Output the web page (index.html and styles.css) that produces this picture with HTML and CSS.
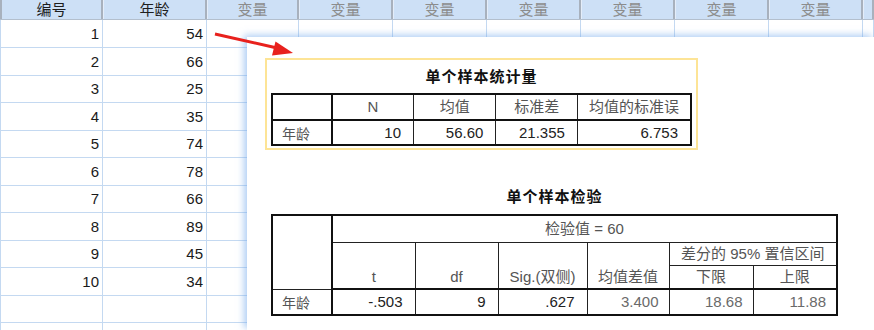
FILE: index.html
```html
<!DOCTYPE html>
<html lang="zh">
<head>
<meta charset="utf-8">
<link rel="stylesheet" href="styles.css">
</head>
<body>
<div class="sheet">
  <div class="row hdr">
    <div class="hc first">编号</div>
    <div class="hc">年龄</div>
    <div class="hc var">变量</div>
    <div class="hc var">变量</div>
    <div class="hc var">变量</div>
    <div class="hc var">变量</div>
    <div class="hc var">变量</div>
    <div class="hc var">变量</div>
    <div class="hc var">变量</div>
    <div class="hc var"></div>
  </div>
  <div class="row"><div class="c first">1</div><div class="c">54</div><div class="c"></div><div class="c"></div><div class="c"></div><div class="c"></div><div class="c"></div><div class="c"></div><div class="c"></div><div class="c"></div></div>
  <div class="row"><div class="c first">2</div><div class="c">66</div><div class="c"></div><div class="c"></div><div class="c"></div><div class="c"></div><div class="c"></div><div class="c"></div><div class="c"></div><div class="c"></div></div>
  <div class="row"><div class="c first">3</div><div class="c">25</div><div class="c"></div><div class="c"></div><div class="c"></div><div class="c"></div><div class="c"></div><div class="c"></div><div class="c"></div><div class="c"></div></div>
  <div class="row"><div class="c first">4</div><div class="c">35</div><div class="c"></div><div class="c"></div><div class="c"></div><div class="c"></div><div class="c"></div><div class="c"></div><div class="c"></div><div class="c"></div></div>
  <div class="row"><div class="c first">5</div><div class="c">74</div><div class="c"></div><div class="c"></div><div class="c"></div><div class="c"></div><div class="c"></div><div class="c"></div><div class="c"></div><div class="c"></div></div>
  <div class="row"><div class="c first">6</div><div class="c">78</div><div class="c"></div><div class="c"></div><div class="c"></div><div class="c"></div><div class="c"></div><div class="c"></div><div class="c"></div><div class="c"></div></div>
  <div class="row"><div class="c first">7</div><div class="c">66</div><div class="c"></div><div class="c"></div><div class="c"></div><div class="c"></div><div class="c"></div><div class="c"></div><div class="c"></div><div class="c"></div></div>
  <div class="row"><div class="c first">8</div><div class="c">89</div><div class="c"></div><div class="c"></div><div class="c"></div><div class="c"></div><div class="c"></div><div class="c"></div><div class="c"></div><div class="c"></div></div>
  <div class="row"><div class="c first">9</div><div class="c">45</div><div class="c"></div><div class="c"></div><div class="c"></div><div class="c"></div><div class="c"></div><div class="c"></div><div class="c"></div><div class="c"></div></div>
  <div class="row"><div class="c first">10</div><div class="c">34</div><div class="c"></div><div class="c"></div><div class="c"></div><div class="c"></div><div class="c"></div><div class="c"></div><div class="c"></div><div class="c"></div></div>
  <div class="row"><div class="c first"></div><div class="c"></div><div class="c"></div><div class="c"></div><div class="c"></div><div class="c"></div><div class="c"></div><div class="c"></div><div class="c"></div><div class="c"></div></div>
  <div class="row"><div class="c first"></div><div class="c"></div><div class="c"></div><div class="c"></div><div class="c"></div><div class="c"></div><div class="c"></div><div class="c"></div><div class="c"></div><div class="c"></div></div>
</div>

<div class="output">
  <div class="box">
    <div class="title">单个样本统计量</div>
    <table class="stat t1">
      <colgroup><col class="w60"><col class="w83"><col class="w83"><col class="w82"><col class="w114"></colgroup>
      <tr class="head">
        <td class="lab"></td>
        <td class="ctr">N</td>
        <td class="ctr">均值</td>
        <td class="ctr">标准差</td>
        <td class="ctr">均值的标准误</td>
      </tr>
      <tr class="data">
        <td class="lab">年龄</td>
        <td class="num">10</td>
        <td class="num">56.60</td>
        <td class="num">21.355</td>
        <td class="num">6.753</td>
      </tr>
    </table>
  </div>

  <div class="sec2">
    <div class="title">单个样本检验</div>
    <table class="stat t2">
      <colgroup><col class="w60"><col class="w83"><col class="w83"><col class="w89"><col class="w82"><col class="w84"><col class="w84"></colgroup>
      <tr class="r1">
        <td class="lab" rowspan="3"></td>
        <td class="ctr" colspan="6">检验值 = 60</td>
      </tr>
      <tr class="r2">
        <td class="ctr bot hb" rowspan="2">t</td>
        <td class="ctr bot hb" rowspan="2">df</td>
        <td class="ctr bot hb" rowspan="2">Sig.(双侧)</td>
        <td class="ctr bot hb" rowspan="2">均值差值</td>
        <td class="ctr" colspan="2">差分的 95% 置信区间</td>
      </tr>
      <tr class="r3">
        <td class="ctr hb">下限</td>
        <td class="ctr hb">上限</td>
      </tr>
      <tr class="data">
        <td class="lab">年龄</td>
        <td class="num">-.503</td>
        <td class="num">9</td>
        <td class="num">.627</td>
        <td class="num fuzzy">3.400</td>
        <td class="num fuzzy">18.68</td>
        <td class="num fuzzy">11.88</td>
      </tr>
    </table>
  </div>
</div>

<svg class="arrow" width="874" height="330" viewBox="0 0 874 330">
  <line x1="215" y1="34" x2="276" y2="47.7" stroke="#e8211d" stroke-width="3"/>
  <polygon points="293,53 272,55.5 275.5,41.5" fill="#e8211d"/>
</svg>
</body>
</html>
```

FILE: styles.css
```css
html, body {
  margin: 0;
  padding: 0;
}
body {
  width: 874px;
  height: 330px;
  overflow: hidden;
  position: relative;
  background: #fff;
  font-family: "Liberation Sans", "Noto Sans CJK SC", sans-serif;
}

/* spreadsheet */
.sheet {
  display: flex;
  flex-direction: column;
  height: 330px;
  overflow: hidden;
}
.row {
  display: grid;
  grid-template-columns: 103px 104px 92px 94px 94px 94px 94px 94px 94px 1fr;
  height: 27.5px;
  flex: none;
}
.row.hdr {
  height: 20px;
  background: #cde0f6;
  border-bottom: 1px solid #b3bfcd;
  box-sizing: border-box;
}
.hc {
  box-sizing: border-box;
  border-right: 2px solid #a8b1bd;
  border-left: 1px solid #e4edf9;
  text-align: center;
  font-size: 15px;
  line-height: 19px;
  color: #1e1e1e;
}
.hc.first {
  border-left: 2px solid #a8b1bd;
}
.hc.var {
  color: #8c8c8c;
}
.c {
  box-sizing: border-box;
  border-right: 1px solid #c4d9f1;
  border-bottom: 1px solid #c4d9f1;
  text-align: right;
  padding-right: 3px;
  font-size: 15px;
  line-height: 27px;
  color: #1a1a1a;
}
.c.first {
  border-left: 1px solid #c4d9f1;
}

/* output viewer window */
.output {
  position: absolute;
  left: 247px;
  top: 37px;
  right: 0;
  bottom: 0;
  background: #fff;
  box-shadow: -3px -2px 7px rgba(110, 165, 235, 0.55);
  padding: 21px 0 0 18px;
  display: flex;
  flex-direction: column;
  align-items: flex-start;
  overflow: hidden;
}
.box {
  width: 433px;
  height: 92px;
  box-sizing: border-box;
  border: 2px solid #fde496;
  padding: 0 4px;
  display: flex;
  flex-direction: column;
  align-items: center;
}
.title {
  font-family: "Noto Sans CJK SC", sans-serif;
  font-weight: 700;
  font-size: 15px;
  line-height: 20px;
  letter-spacing: 1px;
  color: #111;
  text-align: center;
}
.box .title {
  margin-top: 6px;
  margin-bottom: 7px;
}
.sec2 {
  margin-top: 36px;
  margin-left: 6px;
  display: flex;
  flex-direction: column;
  align-items: center;
}
.sec2 .title {
  margin-bottom: 8px;
}

.stat {
  border-collapse: collapse;
  table-layout: fixed;
  border: 2px solid #111;
  font-size: 15px;
  color: #222;
}
.stat td {
  border: 1px solid #222;
  padding: 0;
  line-height: 18px;
  white-space: nowrap;
  overflow: hidden;
}
.stat td.lab {
  border-right: 2px solid #111;
  padding-left: 9px;
  color: #555;
  font-family: "Noto Sans CJK SC", sans-serif;
  font-size: 14px;
}
.stat td.ctr {
  text-align: center;
  color: #555;
}
.stat td.num {
  text-align: right;
  padding-right: 12px;
  color: #222;
}
.stat td.bot {
  vertical-align: bottom;
  padding-bottom: 2px;
}
.stat td.fuzzy {
  color: #6a6a6a;
  padding-right: 10px;
}
.t1 .head td {
  height: 24px;
  border-bottom: 2px solid #111;
}
.t1 .data td {
  height: 23px;
}
.t2 .r1 td { height: 26px; }
.t2 .r2 td { height: 22px; }
.t2 .r3 td { height: 22px; }
.t2 td.hb { border-bottom: 2px solid #111; }
.t2 .data td { height: 24px; }

.w60 { width: 60px; }
.w82 { width: 82px; }
.w83 { width: 83px; }
.w84 { width: 84px; }
.w89 { width: 89px; }
.w114 { width: 114px; }

.arrow {
  position: absolute;
  left: 0;
  top: 0;
  pointer-events: none;
}
```
